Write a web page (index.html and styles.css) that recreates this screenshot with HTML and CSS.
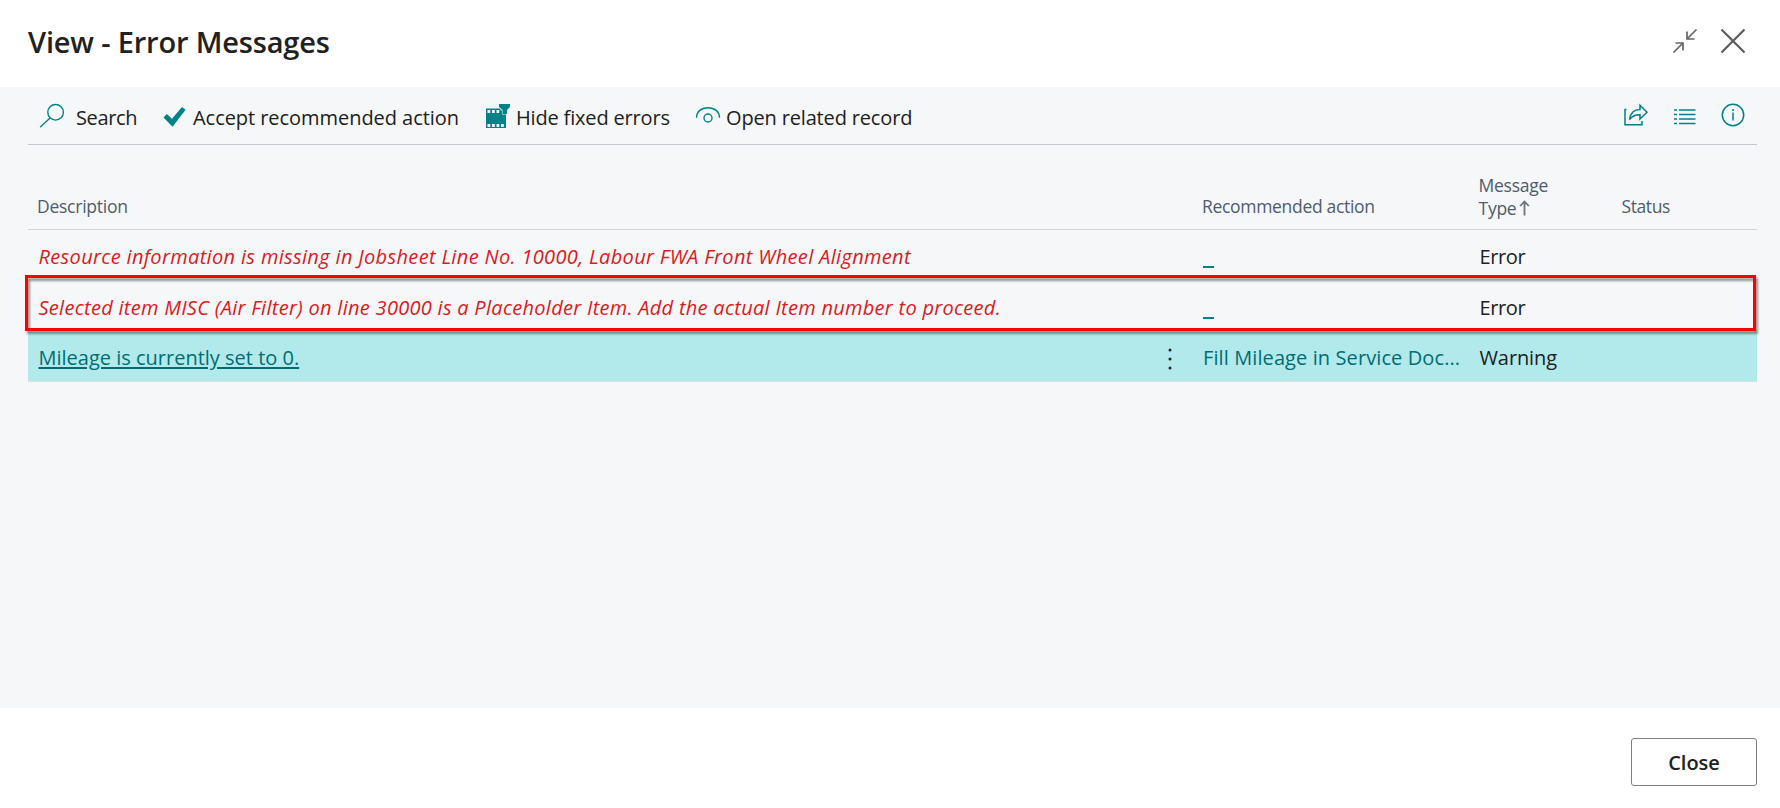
FILE: index.html
```
<!DOCTYPE html>
<html lang="en">
<head>
<meta charset="utf-8">
<title>View - Error Messages</title>
<link rel="stylesheet" href="styles.css">
</head>
<body>
<header class="titlebar">
  <h1 class="title">View - Error Messages</h1>
  <div class="window-actions">
    <svg class="icon" width="26" height="26" viewBox="0 0 26 26" fill="none" stroke="#666" stroke-width="1.700"><path d="M1.500 24.500 11 15M3.500 15H11v7.500M24.500 1.500 15 11M15 3.500V11h7.500"/></svg>
    <svg class="icon" width="26" height="26" viewBox="0 0 26 26" fill="none" stroke="#5c5c5c" stroke-width="2.200"><path d="M1.500 1.500 24.500 24.500M24.500 1.500 1.500 24.500"/></svg>
  </div>
</header>
<main class="panel">
  <nav class="toolbar">
    <button class="command search">
      <svg class="icon" width="26" height="26" viewBox="0 0 26 26" fill="none" stroke="#00828a" stroke-width="1.400"><circle cx="16.600" cy="9.300" r="7.800"/><path d="M11 15 1.200 24.300"/></svg>
      <span class="label">Search</span>
    </button>
    <button class="command accept">
      <svg class="icon" width="24" height="22" viewBox="0 0 24 22" fill="#00828a"><path d="M0.500 11.500 3.700 8 9 12.800 19 1 22.600 3.700 9.600 20.800Z"/></svg>
      <span class="label">Accept recommended action</span>
    </button>
    <button class="command hide">
      <svg class="icon" width="26" height="26" viewBox="0 0 26 26"><path fill="#00828a" d="M1 5.500H14.500L17 8V11.500H21V25H1Z"/><path fill="#f5f7f9" d="M2.500 7h2.800v3H2.500zM7 7h2.800v3H7zM11.500 7h2.800v3h-2.800zM2.500 21h2.800v3H2.500zM7 21h2.800v3H7zM11.500 21h2.800v3h-2.800zM16 21h2.800v3H16z"/><path fill="#00828a" d="M14 1H25V4L22 7V11H17.500V7L14 4Z"/></svg>
      <span class="label">Hide fixed errors</span>
    </button>
    <button class="command open">
      <svg class="icon" width="26" height="18" viewBox="0 0 26 18" fill="none" stroke="#00828a" stroke-width="1.400"><path d="M1.500 11.800C1.500 5.500 6.500 1.700 13 1.700S24.500 5.500 24.500 11.800"/><circle cx="13" cy="12" r="4"/></svg>
      <span class="label">Open related record</span>
    </button>
    <div class="tools">
      <svg class="icon" width="26" height="24" viewBox="0 0 26 24" fill="none" stroke="#00828a" stroke-width="1.500"><path d="M3.500 6.500H2V21.700H19V18"/><path d="M6.500 16.500C7.500 10 11 6.500 17 6.500V2.200L24 9.200 17 16V11.700C12 11.500 9 13 6.500 16.500Z"/></svg>
      <svg class="icon" width="24" height="18" viewBox="0 0 24 18" fill="none" stroke="#00828a" stroke-width="1.600"><path d="M1 2H4M1 6.500H4M1 11H4M1 15.500H4M6 2H22.500M6 6.500H22.500M6 11H22.500M6 15.500H22.500"/></svg>
      <svg class="icon" width="24" height="24" viewBox="0 0 24 24" fill="none" stroke="#00828a" stroke-width="1.500"><circle cx="12" cy="12" r="10.700"/><path d="M12 9.500V17.500M12 6V8"/></svg>
    </div>
  </nav>
  <section class="grid">
    <div class="row head">
      <div class="cell h-desc"><span>Description</span></div>
      <div class="cell"></div>
      <div class="cell h-rec"><span>Recommended action</span></div>
      <div class="cell h-type"><span class="h-msg">Message</span><span class="h-sort"><span>Type</span><svg width="11" height="16" viewBox="0 0 11 16" fill="none" stroke="#6f747b" stroke-width="1.800"><path d="M5.500 15.500V1.500M1.200 6 5.500 1.500 9.800 6"/></svg></span></div>
      <div class="cell h-status"><span>Status</span></div>
    </div>
    <div class="row">
      <div class="cell error e1"><span>Resource information is missing in Jobsheet Line No. 10000, Labour FWA Front Wheel Alignment</span></div>
      <div class="cell"></div>
      <div class="cell link"><span class="blank"></span></div>
      <div class="cell kind"><span>Error</span></div>
      <div class="cell"></div>
    </div>
    <div class="row marked">
      <div class="cell error e2"><span>Selected item MISC (Air Filter) on line 30000 is a Placeholder Item. Add the actual Item number to proceed.</span></div>
      <div class="cell"></div>
      <div class="cell link"><span class="blank"></span></div>
      <div class="cell kind"><span>Error</span></div>
      <div class="cell"></div>
      <div class="highlight"></div>
    </div>
    <div class="row selected">
      <div class="cell message"><span>Mileage is currently set to 0.</span></div>
      <div class="cell more"><svg width="4" height="22" viewBox="0 0 4 22" fill="#222"><circle cx="2" cy="2" r="1.500"/><circle cx="2" cy="11" r="1.500"/><circle cx="2" cy="20" r="1.500"/></svg></div>
      <div class="cell fix"><span>Fill Mileage in Service Doc...</span></div>
      <div class="cell kind warn"><span>Warning</span></div>
      <div class="cell"></div>
    </div>
  </section>
</main>
<footer class="footer"><button class="close">Close</button></footer>
</body>
</html>
```
FILE: styles.css
```
* { box-sizing: border-box; }
body {
  margin: 0;
  width: 1780px;
  height: 808px;
  display: flex;
  flex-direction: column;
  background: #fff;
  color: #212121;
  font-family: "Open Sans", "Noto Sans", sans-serif;
  font-size: 20px;
  white-space: nowrap;
  overflow: hidden;
}
svg { display: block; flex: none; }
button { font: inherit; color: inherit; background: none; border: 0; padding: 0; }
.titlebar {
  height: 87px;
  padding: 0 34px 0 28px;
  display: flex;
  justify-content: space-between;
}
.title { margin: 22px 0 0; font-size: 29px; line-height: 40px; font-weight: 600; letter-spacing: -0.17px; }
.window-actions { display: flex; gap: 22px; padding-top: 28px; }
.panel { height: 621px; padding: 0 23px 0 28px; background: #f5f7f9; }
.toolbar {
  height: 58px;
  display: flex;
  border-bottom: 1px solid #c3c7cf;
}
.command { display: flex; align-items: flex-start; height: 57px; }
.label { line-height: 28px; margin-top: 17px; }
.search { margin-left: 11px; }
.search .icon { margin-top: 16px; }
.search .label { margin-left: 11px; width: 61px; letter-spacing: -0.35px; }
.accept { margin-left: 26px; }
.accept .icon { margin-top: 19px; }
.accept .label { margin-left: 6px; width: 267px; letter-spacing: -0.05px; text-align: left; }
.hide { margin-left: 25px; }
.hide .icon { margin-top: 16px; }
.hide .label { margin-left: 5px; width: 154px; letter-spacing: -0.17px; text-align: left; }
.open { margin-left: 25px; }
.open .icon { margin-top: 19px; }
.open .label { margin-left: 5px; letter-spacing: -0.16px; }
.tools { display: flex; gap: 24px; margin-left: auto; padding-right: 12px; }
.tools .icon { margin-top: 16px; }
.tools .icon:nth-child(2) { margin-top: 21px; }
.row {
  position: relative;
  display: grid;
  grid-template-columns: 1117px 39px 277px 143px 153px;
  height: 51px;
}
.row:nth-child(3) { height: 50px; }
.cell { padding-left: 11px; line-height: 28px; padding-top: 13px; }
.head { height: 85px; border-bottom: 1px solid #d0d3d8; color: #505c6d; font-size: 17.500px; letter-spacing: -0.25px; }
.head .cell { padding: 47px 0 0 9px; }
.head .h-rec { padding-left: 18px; letter-spacing: -0.31px; }
.head .h-type { display: flex; flex-direction: column; padding: 29px 0 0 17.500px; line-height: 23px; }
.h-sort { display: flex; gap: 3px; }
.h-sort svg { margin-top: 3px; }
.head .h-status { padding-left: 17.500px; letter-spacing: -0.4px; }
.error { color: #dc1a22; font-style: italic; }
.e1 { letter-spacing: 0.344px; padding-left: 10.500px; }
.e2 { letter-spacing: 0.286px; padding-left: 10.500px; }
.link { padding: 36px 0 0 19px; }
.blank { display: block; width: 11px; height: 2px; background: #00828a; }
.kind { padding-left: 18.500px; letter-spacing: -0.4px; }
.warn { letter-spacing: -0.1px; }
.highlight {
  position: absolute;
  z-index: 1;
  left: -3px;
  top: -6px;
  width: 1731px;
  height: 56px;
  border: 3px solid #f00;
  filter: drop-shadow(2px 3px 1px rgba(0, 0, 0, .4));
}
.selected { background: #b2e9eb; border-bottom: 1px solid #d9e0e2; }
.message { color: #006d73; text-decoration: underline; text-decoration-thickness: 2px; text-underline-offset: 2px; padding-left: 10.500px; }
.more { padding: 17px 0 0 23px; }
.fix { color: #006d73; padding-left: 19px; letter-spacing: 0.1px; }
.footer { height: 100px; padding: 30px 23px 0 0; display: flex; justify-content: flex-end; }
.close { width: 126px; height: 48px; border: 1px solid #808080; border-radius: 3px; font-weight: 600; font-size: 20px; }
```
